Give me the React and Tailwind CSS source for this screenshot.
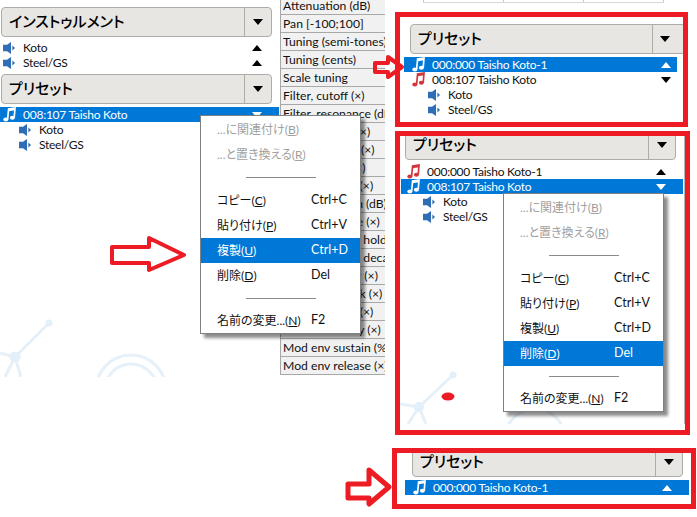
import React from "react";

const FONT = { fontFamily: 'Lato,"Noto Sans CJK JP",sans-serif' };

function Note({ light }) {
  const c = light ? "#ffffff" : "#d2363c";
  return (
    <svg width="13" height="15" viewBox="0 0 13 15" className="shrink-0">
      <path d="M4.6 12.5 L5.6 2 L12 1 L11.2 10.6" fill="none" stroke={c} strokeWidth="1.7" />
      <path d="M5.4 3.2 L12 2.2" fill="none" stroke={c} strokeWidth="2" />
      <ellipse cx="2.8" cy="12.6" rx="2.5" ry="2" fill={c} />
      <ellipse cx="9.4" cy="10.8" rx="2.5" ry="2" fill={c} />
    </svg>
  );
}

function Speaker() {
  return (
    <svg width="12" height="12" viewBox="0 0 12 12" className="shrink-0">
      <path d="M0 2.8 H4 L8 0 V12 L4 9.2 H0 Z" fill="#2f6db5" />
      <path d="M9.4 3.6 L12 6 L9.4 8.4 Z" fill="#2f6db5" />
    </svg>
  );
}

function Tri({ up, light }) {
  return (
    <svg width="10" height="6" viewBox="0 0 10 6" className="shrink-0">
      <path d={up ? "M5 0 L10 6 H0 Z" : "M0 0 H10 L5 6 Z"} fill={light ? "#ffffff" : "#000000"} />
    </svg>
  );
}

function Header({ label, className, btn = "w-[27px]" }) {
  return (
    <div className={`flex h-[30px] shrink-0 rounded-[4px] border border-[#aeaca6] bg-[#e8e6e2] ${className}`}>
      <div className="flex-1 pl-[7px] text-[15px] leading-[27px] font-medium text-black [font-feature-settings:'palt']">{label}</div>
      <div className={`flex items-center justify-center border-l border-[#aeaca6] ${btn}`}>
        <Tri />
      </div>
    </div>
  );
}

function Row({ kind, label, selected, arrow, pl = "pl-[3px]", pr = "pr-[17px]" }) {
  return (
    <div className={`flex h-[15px] items-center text-[12px] leading-[15px] tracking-[-0.25px] ${selected ? "bg-[#0078d7] text-white" : "text-[#111]"} ${pr}`}>
      <div className={`flex flex-1 items-center gap-[7px] ${pl}`}>
        {kind === "note" ? <Note light={selected} /> : <span className="mr-[1px] flex"><Speaker /></span>}
        <span className="whitespace-nowrap">{label}</span>
      </div>
      {arrow && <Tri up={arrow === "up"} light={selected} />}
    </div>
  );
}

const MENU = [
  { t: "...に関連付け", k: "B", dis: true },
  { t: "...と置き換える", k: "R", dis: true },
  { sep: true, h: "h-[21px]" },
  { t: "コピー", k: "C", s: "Ctrl+C" },
  { t: "貼り付け", k: "P", s: "Ctrl+V" },
  { t: "複製", k: "U", s: "Ctrl+D" },
  { t: "削除", k: "D", s: "Del" },
  { sep: true, h: "h-[20px]" },
  { t: "名前の変更...", k: "N", s: "F2" },
];

function Menu({ className, active }) {
  return (
    <div className={`absolute z-10 flex w-[161px] flex-col border border-[#808080] bg-white pt-[1px] shadow-[4px_4px_3px_rgba(0,0,0,0.45)] ${className}`}>
      {MENU.map((m, i) =>
        m.sep ? (
          <div key={i} className={`flex items-center pl-[45px] ${m.h}`}>
            <div className="h-px w-[70px] bg-[#8a8a8a]" />
          </div>
        ) : (
          <div
            key={i}
            className={`grid h-[25px] grid-cols-[94px_1fr] items-center whitespace-nowrap pl-[16px] text-[12px] ${
              m.t === active ? "bg-[#0078d7] text-white" : m.dis ? "text-[#a0a0a0]" : "text-[#111]"
            }`}
          >
            <span className="[font-feature-settings:'palt']">
              {m.t}(<span className="underline">{m.k}</span>)
            </span>
            <span className="text-[12.5px]">{m.s}</span>
          </div>
        )
      )}
    </div>
  );
}

const TABLE = [
  "Pan [-100;100]",
  "Tuning (semi-tones)",
  "Tuning (cents)",
  "Scale tuning",
  "Filter, cutoff (×)",
  "Filter, resonance (dB)",
  "Vol env delay (×)",
  "Vol env attack (×)",
  "Vol env hold (×)",
  "Vol env decay (×)",
  "Vol env sustain (dB)",
  "Vol env release (×)",
  "Key → Vol env hold",
  "Key → Vol env decay",
  "Mod env delay (×)",
  "Mod env attack (×)",
  "Mod env hold (×)",
  "Mod env decay (×)",
  "Mod env sustain (%)",
  "Mod env release (×)",
];

function Arrow({ w, h, d, sw = 4 }) {
  return (
    <svg width={w} height={h} viewBox={`0 0 ${w} ${h}`} className="pointer-events-none absolute left-0 top-0 z-20">
      <path d={d} fill="none" stroke="#ed1c24" strokeWidth={sw} strokeLinejoin="round" />
    </svg>
  );
}

export default function App() {
  return (
    <div style={FONT} className="relative flex h-[517px] w-[697px] overflow-hidden bg-white">
      {/* watermark, left */}
      <svg width="170" height="377" viewBox="0 0 170 377" className="absolute left-0 top-0">
        <g stroke="#e6f0f9" strokeWidth="3" fill="none">
          <path d="M15 357 L49 323 M15 357 L0 353 M15 357 L5 377 M15 357 L21 377" />
          <circle cx="131" cy="390" r="35" />
          <circle cx="131" cy="390" r="26" />
        </g>
        <circle cx="15" cy="357" r="5.5" fill="#e3eff9" />
        <circle cx="49" cy="323" r="3.5" fill="#e3eff9" />
      </svg>

      {/* left column */}
      <div className="relative flex w-[280px] shrink-0 flex-col pt-[7px]">
        <Header label="インストゥルメント" className="ml-[1px] w-[271px]" />
        <div className="mt-[3px] w-[279px]">
          <Row kind="speaker" label="Koto" arrow="up" />
          <Row kind="speaker" label="Steel/GS" arrow="up" />
        </div>
        <Header label="プリセット" className="ml-[1px] mt-[4px] w-[271px]" />
        <div className="mt-[3px] w-[279px]">
          <Row kind="note" label="008:107 Taisho Koto" selected arrow="down" />
          <Row kind="speaker" label="Koto" pl="pl-[19px]" />
          <Row kind="speaker" label="Steel/GS" pl="pl-[19px]" />
        </div>
      </div>

      {/* parameter table */}
      <div className="h-[375px] w-[105px] shrink-0 overflow-hidden border-l border-[#a8a8a8] bg-[#f1f1f1] text-[12.2px] text-[#111]">
        <div className="flex h-[15px] items-end overflow-hidden border-b border-[#a8a8a8] pl-[2px] leading-[17px] whitespace-nowrap">
          Attenuation (dB)
        </div>
        {TABLE.map((t) => (
          <div key={t} className="h-[18px] overflow-hidden border-b border-[#a8a8a8] pl-[2px] leading-[17px] whitespace-nowrap">
            {t}
          </div>
        ))}
      </div>

      {/* annotated right column */}
      <div className="relative flex w-[312px] shrink-0 flex-col">
        <div className="ml-[38px] flex h-[3px] w-[241px] justify-between border-b border-[#d8d8d8]">
          <div className="h-full w-px bg-[#c8c8c8]" />
          <div className="h-full w-px bg-[#c8c8c8]" />
          <div className="h-full w-px bg-[#c8c8c8]" />
          <div className="h-full w-px bg-[#c8c8c8]" />
        </div>

        {/* frame 1 */}
        <div className="ml-[10px] mt-[9px] h-[115px] w-[293px] shrink-0 overflow-hidden border-[5px] border-[#ed1c24] bg-white pt-[7px]">
          <Header label="プリセット" className="ml-[10px] w-[278px]" btn="w-[35px] pr-[11px]" />
          <div className="ml-[4px] mt-[3px] w-[273px]">
            <Row kind="note" label="000:000 Taisho Koto-1" selected arrow="up" pl="pl-[8px]" pr="pr-[6px]" />
            <Row kind="note" label="008:107 Taisho Koto" arrow="down" pl="pl-[8px]" pr="pr-[6px]" />
            <Row kind="speaker" label="Koto" pl="pl-[24px]" />
            <Row kind="speaker" label="Steel/GS" pl="pl-[24px]" />
          </div>
        </div>

        {/* frame 2 */}
        <div className="ml-[10px] mt-[4px] h-[304px] w-[295px] shrink-0 overflow-hidden border-[5px] border-[#ed1c24] bg-white">
          <div className="relative h-full w-[285px] border-r border-[#b5b5b5]">
            <svg width="200" height="60" viewBox="0 0 200 60" className="absolute left-0 top-[234px]">
              <g stroke="#e6f0f9" strokeWidth="3" fill="none">
                <path d="M53 11 L19 43 M19 43 L0 40 M19 43 L8 60 M19 43 L26 60" />
                <circle cx="135" cy="75" r="30" />
              </g>
              <circle cx="19" cy="43" r="5" fill="#e3eff9" />
              <circle cx="53" cy="11" r="3.5" fill="#e3eff9" />
            </svg>
            <div className="relative -mt-[6px]">
              <Header label="プリセット" className="ml-[5px] w-[271px]" />
            </div>
            <div className="relative ml-[1px] mt-[4px] w-[282px]">
              <Row kind="note" label="000:000 Taisho Koto-1" arrow="up" pl="pl-[6px]" />
              <Row kind="note" label="008:107 Taisho Koto" selected arrow="down" pl="pl-[6px]" />
              <Row kind="speaker" label="Koto" pl="pl-[22px]" />
              <Row kind="speaker" label="Steel/GS" pl="pl-[22px]" />
            </div>
          </div>
        </div>

        {/* frame 3 */}
        <div className="relative ml-[7px] mt-[13px] h-[61px] w-[304px] shrink-0 overflow-hidden border-[5px] border-[#ed1c24] bg-white">
          <div className="relative -mt-[6px]">
            <Header label="プリセット" className="ml-[15px] w-[271px]" />
          </div>
          <div className="ml-[8px] mt-[3px] w-[284px]">
            <Row kind="note" label="000:000 Taisho Koto-1" selected arrow="up" pl="pl-[8px]" />
          </div>
        </div>
      </div>

      <Menu className="left-[200px] top-[115px]" active="複製" />
      <Menu className="left-[503px] top-[193px]" active="削除" />

      <Arrow w={200} h={280} d="M112 247 H149 V238 L184 255 L149 270 V263 H112 Z" />
      <Arrow w={420} h={90} d="M375 63 H388 V57 L402 67 L388 77 V72 H375 Z" />
      <Arrow w={400} h={517} sw={5} d="M348 484 H369 V470 L389 487 L369 504 V498 H348 Z" />
      <svg width="14" height="9" viewBox="0 0 14 9" className="absolute left-[441px] top-[392px] z-20">
        <ellipse cx="7" cy="4.5" rx="6.5" ry="4" fill="#ed1c24" />
      </svg>
    </div>
  );
}
